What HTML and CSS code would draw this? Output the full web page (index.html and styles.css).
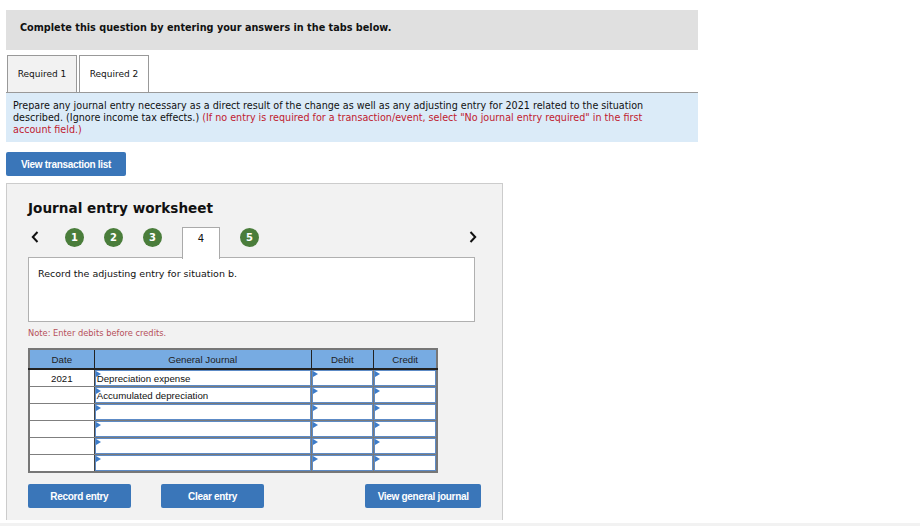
FILE: index.html
```html
<!DOCTYPE html>
<html lang="en">
<head>
    <meta charset="UTF-8">
    <title>Journal entry worksheet</title>
    <link rel="stylesheet" href="styles.css">
</head>
<body>
    <div class="page">
        <!-- Kopfzeile -->
        <div class="question-head">Complete this question by entering your answers in the tabs below.</div>

        <div class="tabs">
            <div class="tab">Required 1</div>
            <div class="tab active">Required 2</div>
        </div>

        <div class="prompt">
            Prepare any journal entry necessary as a direct result of the change as well as any adjusting entry for 2021 related to the situation<br>
            described. (Ignore income tax effects.) <span class="hint">(If no entry is required for a transaction/event, select "No journal entry required" in the first<br>
            account field.)</span>
        </div>

        <button class="btn btn-list">View transaction list</button>

        <!-- Worksheet -->
        <div class="worksheet">
            <h2>Journal entry worksheet</h2>

            <div class="steps">
                <svg class="arrow" width="8" height="12" viewBox="0 0 8 12"><path d="M6.5 1 L1.8 6 L6.5 11" fill="none" stroke="#111" stroke-width="2"/></svg>
                <span class="step">1</span>
                <span class="step">2</span>
                <span class="step">3</span>
                <span class="step current">4</span>
                <span class="step">5</span>
                <svg class="arrow right" width="8" height="12" viewBox="0 0 8 12"><path d="M1.5 1 L6.2 6 L1.5 11" fill="none" stroke="#111" stroke-width="2"/></svg>
            </div>

            <div class="step-text">Record the adjusting entry for situation b.</div>

            <p class="note">Note: Enter debits before credits.</p>

            <table class="journal">
                <thead>
                    <tr>
                        <th class="col-date">Date</th>
                        <th class="col-acc">General Journal</th>
                        <th class="col-num">Debit</th>
                        <th class="col-num">Credit</th>
                    </tr>
                </thead>
                <tbody>
                    <tr><td class="date">2021</td><td class="input">Depreciation expense</td><td class="input"></td><td class="input"></td></tr>
                    <tr><td class="date"></td><td class="input">Accumulated depreciation</td><td class="input"></td><td class="input"></td></tr>
                    <tr><td class="date"></td><td class="input"></td><td class="input"></td><td class="input"></td></tr>
                    <tr><td class="date"></td><td class="input"></td><td class="input"></td><td class="input"></td></tr>
                    <tr><td class="date"></td><td class="input"></td><td class="input"></td><td class="input"></td></tr>
                    <tr><td class="date"></td><td class="input"></td><td class="input"></td><td class="input"></td></tr>
                </tbody>
            </table>

            <div class="actions">
                <button class="btn btn-record">Record entry</button>
                <button class="btn btn-clear">Clear entry</button>
                <button class="btn btn-view">View general journal</button>
            </div>
        </div>
    </div>
    <div class="bottom-strip"></div>
</body>
</html>
```

FILE: styles.css
```css
/* Allgemein */
body {
    margin: 0;
    font-family: "DejaVu Sans", Verdana, sans-serif;
    color: #111;
    background: #fff;
}

.page {
    width: 692px;
    padding: 10px 0 0 6px;
}

/* Kopfzeile */
.question-head {
    background: #e0e0e0;
    height: 40px;
    line-height: 35px;
    padding-left: 14px;
    font-size: 9.7px;
    font-weight: bold;
}

/* Tabs */
.tabs {
    display: flex;
    gap: 2px;
    margin-top: 5px;
    padding-left: 1px;
}
.tab {
    width: 68px;
    height: 36px;
    line-height: 36px;
    text-align: center;
    font-size: 9px;
    background: #f2f2f2;
    border: 1px solid #999;
    border-bottom: none;
}
.tab.active {
    background: #fff;
}

.prompt {
    background: #dbebf8;
    border-top: 1px solid #999;
    padding: 7px 7px 6px;
    font-size: 9.6px;
    line-height: 12px;
    white-space: nowrap;
}
.prompt .hint {
    color: #c0202f;
}

/* Buttons */
.btn {
    font-family: "Liberation Sans", Arial, sans-serif;
    font-weight: bold;
    font-size: 10px;
    letter-spacing: -0.3px;
    color: #fff;
    background: #3a76b9;
    border: none;
    border-radius: 2px;
    height: 24px;
    padding: 0;
    cursor: pointer;
}
.btn-list {
    display: block;
    width: 120px;
    margin-top: 10px;
}

/* Worksheet */
.worksheet {
    width: 453px;
    margin-top: 7px;
    padding: 0 21px 12px;
    background: #f2f2f2;
    border: 1px solid #ccc;
    border-bottom: none;
}
.worksheet h2 {
    margin: 0;
    padding-top: 15px;
    font-size: 13.6px;
    font-weight: bold;
    line-height: 18px;
}

.steps {
    display: flex;
    align-items: flex-start;
    gap: 20px;
    width: 447px;
    height: 31px;
    margin-top: 9px;
}
.arrow {
    margin: 5px 6px 0 3px;
}
.arrow.right {
    margin-left: auto;
    margin-right: -2px;
}
.step {
    width: 19px;
    height: 19px;
    margin-top: 2px;
    border-radius: 50%;
    background: #4a7d3b;
    color: #fff;
    font-size: 10px;
    font-weight: bold;
    text-align: center;
    line-height: 19px;
}
.step.current {
    width: 36px;
    height: 31px;
    margin-top: 0;
    line-height: 22px;
    border-radius: 0;
    background: #fff;
    color: #111;
    font-weight: normal;
    border: 1px solid #aaa;
    border-bottom: none;
    position: relative;
    top: 1px;
    z-index: 1;
}

.step-text {
    width: 427px;
    background: #fff;
    border: 1px solid #b0b0b0;
    height: 53px;
    padding: 10px 9px 0;
    font-size: 9.5px;
}

.note {
    margin: 6px 0 0;
    font-size: 8.3px;
    color: #b6505a;
}

/* Journal-Tabelle */
.journal {
    margin-top: 10px;
    width: 410px;
    border-collapse: collapse;
    font-family: "Liberation Sans", Arial, sans-serif;
    font-size: 9.7px;
    border: 2px solid #777;
    background: #fff;
}
.journal th {
    background: #77abe2;
    font-weight: normal;
    height: 18px;
    padding: 0;
    border-left: 1px solid #222;
    border-bottom: 2px solid #222;
    color: #222;
}
.journal th:first-child {
    border-left: none;
}
.col-date { width: 64px; }
.col-acc { width: 217px; }
.col-num { width: 62px; }

.journal td {
    height: 16px;
    padding: 0;
    border: 1px solid #7f7f7f;
}
.journal td.date {
    text-align: center;
    border-right: 1px solid #444;
}
.journal td.input {
    position: relative;
    padding-left: 2px;
    box-shadow: inset 0 0 0 1px #5d8bc6;
    border-color: #7a7a7a;
    line-height: 15px;
}
.journal td.input::before {
    content: "";
    position: absolute;
    top: 1px;
    left: 1px;
    border-top: 3px solid transparent;
    border-bottom: 3px solid transparent;
    border-left: 5px solid #3d7cc9;
}

.actions {
    display: flex;
    margin-top: 11px;
}
.btn-record { width: 103px; }
.btn-clear { width: 104px; margin-left: 30px; }
.btn-view { width: 116px; margin-left: 101px; }

.bottom-strip {
    height: 3px;
    margin-top: 3px;
    background: #f2f2f2;
}
```
